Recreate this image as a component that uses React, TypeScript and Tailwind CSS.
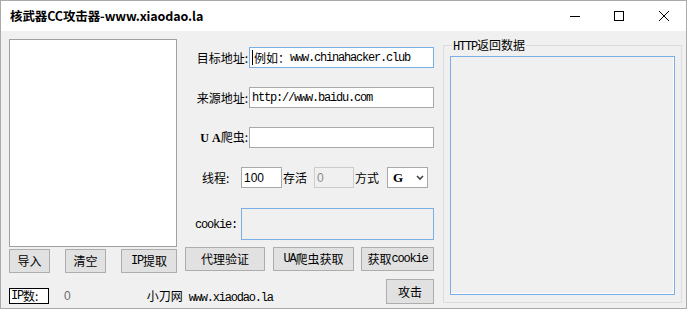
import React from 'react';

// WinForms-style window: 核武器CC攻击器
const A: React.FC<{ children: React.ReactNode }> = ({ children }) => (
  <span className="font-['Liberation_Mono'] text-[12px] tracking-[-1.2px]">{children}</span>
);

const Btn: React.FC<{ className?: string; children: React.ReactNode }> = ({ className = '', children }) => (
  <button
    type="button"
    className={`flex items-center justify-center bg-[#e1e1e1] border border-[#adadad] text-[12px] leading-none text-black ${className}`}
  >
    {children}
  </button>
);

const TitleBar: React.FC = () => (
  <div className="h-[30px] bg-white flex items-center">
    <div className="flex-1 pl-[9px] font-bold text-[12.5px] tracking-[-0.1px]">核武器CC攻击器-www.xiaodao.la</div>
    <div className="flex items-center pr-[17px]">
      <svg width="10" height="10" viewBox="0 0 10 10">
        <path d="M0 5.5h10" stroke="#000" strokeWidth="1" />
      </svg>
      <svg width="10" height="10" viewBox="0 0 10 10" className="ml-[34px]">
        <rect x="0.5" y="0.5" width="9" height="9" fill="none" stroke="#000" strokeWidth="1" />
      </svg>
      <svg width="10" height="10" viewBox="0 0 10 10" className="ml-[35px]">
        <path d="M0 0L10 10M10 0L0 10" stroke="#000" strokeWidth="1" />
      </svg>
    </div>
  </div>
);

const Field: React.FC<{ label: React.ReactNode; className?: string; children?: React.ReactNode }> = ({ label, className = '', children }) => (
  <div className="flex items-center justify-end h-[21px]">
    <span className="mr-[1px]">{label}</span>
    <div className={`w-[185px] h-[21px] bg-white border flex items-center pl-[2px] ${className}`}>{children}</div>
  </div>
);

export default function App() {
  return (
    <div className="w-[687px] h-[309px] border border-[#aaaaaa] bg-[#f0f0f0] flex flex-col font-['Noto_Sans_CJK_SC',sans-serif] text-[12px] text-black overflow-hidden">
      <TitleBar />
      <div className="flex-1 flex pl-[8px] pt-[8px]">
        {/* left + middle */}
        <div className="w-[425px] flex flex-col">
          <div className="flex">
            {/* ip list */}
            <div className="w-[168px] flex flex-col">
              <div className="h-[208px] bg-white border border-[#a0a0a0]" />
              <div className="mt-[2px] flex justify-between">
                <Btn className="w-[41px] h-[24px]">导入</Btn>
                <Btn className="w-[41px] h-[24px]">清空</Btn>
                <Btn className="w-[56px] h-[24px]">
                  <A>IP</A>提取
                </Btn>
              </div>
            </div>

            {/* form */}
            <div className="ml-[8px] w-[249px] flex flex-col pt-[8px]">
              <Field label="目标地址:" className="border-[#7aaee6]">
                <span className="w-[1px] h-[15px] bg-black mr-[1px]" />
                <span>例如：</span>
                <A>www.chinahacker.club</A>
              </Field>
              <div className="mt-[19px]">
                <Field label="来源地址:" className="border-[#a9a9a9]">
                  <A>http://www.baidu.com</A>
                </Field>
              </div>
              <div className="mt-[19px]">
                <Field
                  label={
                    <>
                      <span className="font-['Liberation_Serif'] font-bold text-[12px]">
                        <span className="mr-[3px]">U</span>A
                      </span>
                      爬虫:
                    </>
                  }
                  className="border-[#a9a9a9]"
                />
              </div>

              <div className="mt-[19px] h-[21px] flex items-center">
                <span className="ml-[17px] w-[39px]">线程:</span>
                <div className="w-[41px] h-[21px] bg-white border border-[#a9a9a9] flex items-center pl-[2px] font-['Liberation_Sans']">
                  100
                </div>
                <span className="ml-[1px]">存活</span>
                <div className="ml-[7px] w-[40px] h-[21px] bg-[#f0f0f0] border border-[#cccccc] flex items-center pl-[2px] font-['Liberation_Sans'] text-[#8a8a8a]">
                  0
                </div>
                <span className="ml-[1px]">方式</span>
                <div className="ml-[8px] w-[41px] h-[21px] bg-white border border-[#a9a9a9] flex items-center pl-[5px]">
                  <span className="font-['Liberation_Serif'] font-bold text-[13px]">G</span>
                  <svg width="8" height="6" viewBox="0 0 8 6" className="ml-[13px]">
                    <path d="M1 1l3 3 3-3" fill="none" stroke="#444" strokeWidth="1.6" />
                  </svg>
                </div>
              </div>

              <div className="mt-[20px] h-[32px] flex items-center">
                <span className="ml-[10px] w-[46px]">
                  <A>cookie:</A>
                </span>
                <div className="flex-1 h-[32px] bg-[#f0f0f0] border border-[#7aaee6]" />
              </div>

              <div className="mt-[7px] flex">
                <Btn className="w-[80px] h-[24px]">代理验证</Btn>
                <Btn className="ml-[8px] w-[81px] h-[24px]">
                  <A>UA</A>爬虫获取
                </Btn>
                <Btn className="ml-[7px] w-[73px] h-[24px]">
                  获取<A>cookie</A>
                </Btn>
              </div>
            </div>
          </div>

          {/* status row */}
          <div className="mt-[6px] flex items-end">
            <div className="w-[40px] h-[16px] bg-white border border-black flex items-center pl-[1px] leading-none">
              <A>IP</A>数:
            </div>
            <span className="ml-[15px] h-[16px] leading-[16px] font-['Liberation_Sans'] text-[#6d6d6d]">0</span>
            <span className="ml-[76px] h-[16px] leading-[16px]">小刀网</span>
            <span className="ml-[6px] h-[16px] leading-[16px]">
              <A>www.xiaodao.la</A>
            </span>
            <Btn className="ml-auto w-[48px] h-[25px]">攻击</Btn>
          </div>
        </div>

        {/* response group */}
        <div className="ml-[9px] mt-[6px] w-[239px] h-[258px] border border-[#dcdcdc] relative">
          <span className="absolute left-[8px] top-[-9px] bg-[#f0f0f0] px-[1px] leading-[16px]">
            <A>HTTP</A>返回数据
          </span>
          <div className="ml-[6px] mt-[10px] w-[225px] h-[239px] border border-[#7aaee6] bg-[#f0f0f0] shadow-[inset_-1px_-1px_0_#ffffff]" />
        </div>
      </div>
    </div>
  );
}
